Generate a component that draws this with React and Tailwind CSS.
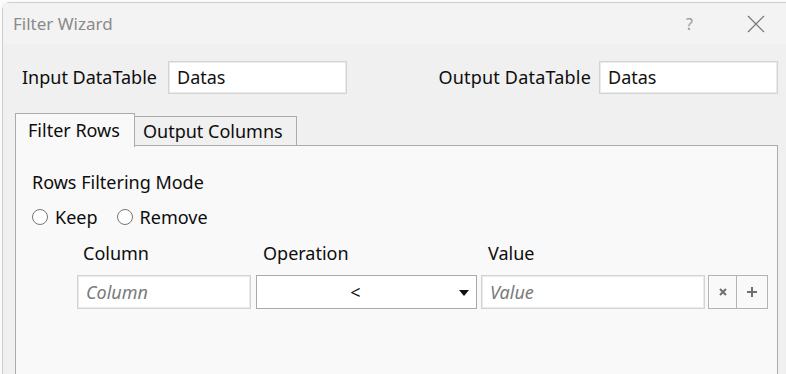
import React from 'react';

const font = { fontFamily: '"Noto Sans", "Open Sans", sans-serif' };

function TextBox({ value, placeholder, className = '' }) {
    return (
        <div className={`h-[34px] bg-white border border-[#d3d3d3] shadow-[inset_0_0_0_1px_#ebebeb] flex items-center pl-[8px] ${className}`}>
            {value
                ? <span className="text-[#111]">{value}</span>
                : <span className="text-[#7a7a7a] italic">{placeholder}</span>}
        </div>
    );
}

function Radio({ label }) {
    return (
        <div className="flex items-center gap-[7px]">
            <span className="w-[16px] h-[16px] rounded-full border border-[#777] bg-white" />
            <span>{label}</span>
        </div>
    );
}

export default function App() {
    return (
        <div className="w-[786px] h-[374px] bg-[#fbfbfb] overflow-hidden pt-[2px] pl-[2px] text-[18px] text-[#0d0d0d]" style={font}>
            <div className="h-[400px] rounded-tl-[8px] border-l border-t border-[#cdcdcd] bg-[#f0f0f0] flex flex-col">
                {/* title bar */}
                <div className="h-[41px] bg-[#f3f3f3] flex items-center pl-[10px] pr-[21px] shrink-0 text-[17px]">
                    <span className="text-[#8a8a8a] flex-1">Filter Wizard</span>
                    <span className="text-[#9a9a9a] text-[16px] mr-[54px]">?</span>
                    <svg width="18" height="18" viewBox="0 0 18 18" className="text-[#777]">
                        <path d="M1 1L17 17M17 1L1 17" stroke="currentColor" strokeWidth="1.2" fill="none" />
                    </svg>
                </div>

                {/* data tables */}
                <div className="flex items-center h-[33px] mt-[17px] pl-[19px] pr-[8px] shrink-0">
                    <span className="w-[146px]">Input DataTable</span>
                    <TextBox value="Datas" className="w-[179px] !h-[33px]" />
                    <span className="flex-1 text-right pr-[8px] tracking-[0.2px]">Output DataTable</span>
                    <TextBox value="Datas" className="w-[179px] !h-[33px]" />
                </div>

                {/* tabs */}
                <div className="flex items-start h-[32px] mt-[19px] pl-[12px] shrink-0">
                    <div className="relative z-10 w-[120px] h-[34px] border border-b-0 border-[#acacac] bg-[#f9f9f9] flex items-center pl-[12px]">
                        Filter Rows
                    </div>
                    <div className="mt-[3px] w-[162px] h-[29px] border border-l-0 border-b-0 border-[#acacac] bg-[#f0f0f0] flex items-center pl-[8px]">
                        Output Columns
                    </div>
                </div>

                <div className="flex-1 ml-[12px] mr-[8px] border border-b-0 border-[#acacac] bg-[#f9f9f9] pl-[16px]">
                    <div className="h-[24px] mt-[24px] flex items-center">Rows Filtering Mode</div>
                    <div className="h-[24px] mt-[11px] flex items-center gap-[19px]">
                        <Radio label="Keep" />
                        <Radio label="Remove" />
                    </div>

                    <div className="h-[24px] mt-[12px] flex items-center pl-[45px]">
                        <span className="w-[179px] pl-[6px]">Column</span>
                        <span className="w-[225px] pl-[7px]">Operation</span>
                        <span className="pl-[7px]">Value</span>
                    </div>

                    <div className="h-[34px] mt-[10px] flex pl-[45px]">
                        <TextBox placeholder="Column" className="w-[174px]" />
                        <div className="ml-[5px] w-[221px] h-[34px] bg-white border border-[#a9a9a9] flex items-center relative">
                            <span className="flex-1 text-center pr-[22px] text-[#111]">&lt;</span>
                            <svg width="10" height="6" viewBox="0 0 10 6" className="absolute right-[7px] top-[14px]">
                                <path d="M0 0H10L5 6Z" fill="#111" />
                            </svg>
                        </div>
                        <TextBox placeholder="Value" className="ml-[4px] w-[224px]" />
                        <div className="ml-[3px] w-[29px] h-[34px] border border-[#b4b4b4] bg-[#f9f9f9] flex items-center justify-center">
                            <svg width="8" height="8" viewBox="0 0 8 8">
                                <path d="M1 1L7 7M7 1L1 7" stroke="#6f6f6f" strokeWidth="2" fill="none" />
                            </svg>
                        </div>
                        <div className="w-[31px] h-[34px] border border-l-0 border-[#b4b4b4] bg-[#f9f9f9] flex items-center justify-center">
                            <svg width="10" height="10" viewBox="0 0 10 10">
                                <path d="M5 0V10M0 5H10" stroke="#6f6f6f" strokeWidth="2" fill="none" />
                            </svg>
                        </div>
                    </div>
                </div>
            </div>
        </div>
    );
}
